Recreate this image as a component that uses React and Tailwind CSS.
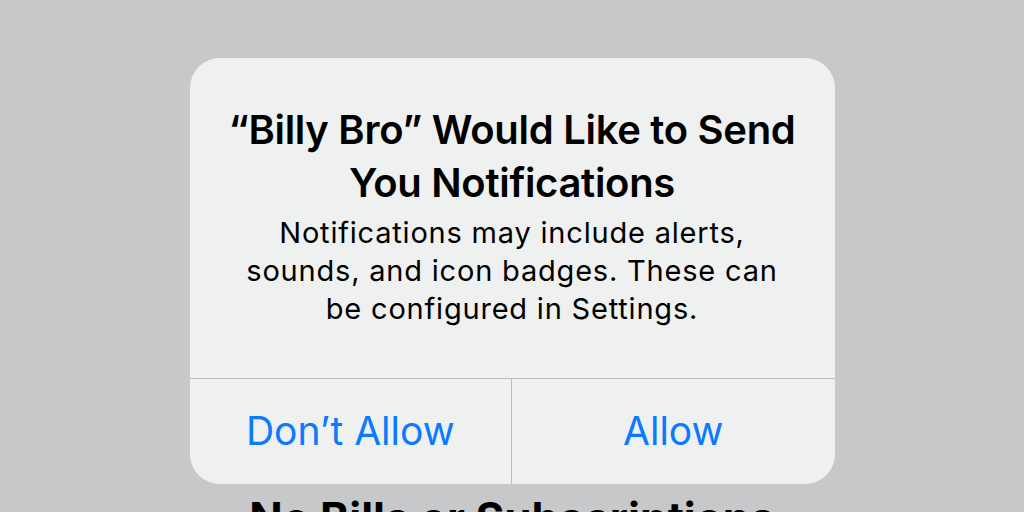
export default function App() {
  return (
    <div
      className="h-[512px] w-full overflow-hidden bg-[#c7c8ca] flex flex-col items-center pt-[58px]"
      style={{ fontFamily: "Inter, 'Noto Sans', sans-serif" }}
    >
      <div className="w-[645px] shrink-0 rounded-[30px] bg-[#eff0f0] overflow-hidden">
        <div className="px-[28px] pt-[45px] pb-[50px] text-center">
          <h2 className="text-[40px] leading-[53px] font-semibold text-black tracking-[-0.3px]">
            “Billy Bro” Would Like to Send You Notifications
          </h2>
          <p className="mt-[5px] text-[29px] leading-[38px] tracking-[0.8px] text-black whitespace-nowrap">
            Notifications may include alerts,
            <br />
            sounds, and icon badges. These can
            <br />
            be configured in Settings.
          </p>
        </div>
        <div className="grid grid-cols-2 border-t border-[#bcbcbe] h-[106px]">
          <button className="flex items-center justify-center border-r border-[#bcbcbe] text-[39px] text-[#0a7aff]">
            Don’t Allow
          </button>
          <button className="flex items-center justify-center text-[39px] text-[#0a7aff]">
            Allow
          </button>
        </div>
      </div>
      <h1 className="shrink-0 mt-[8px] text-[44px] leading-[52px] font-bold text-black whitespace-nowrap">
        No Bills or Subscriptions
      </h1>
    </div>
  );
}
